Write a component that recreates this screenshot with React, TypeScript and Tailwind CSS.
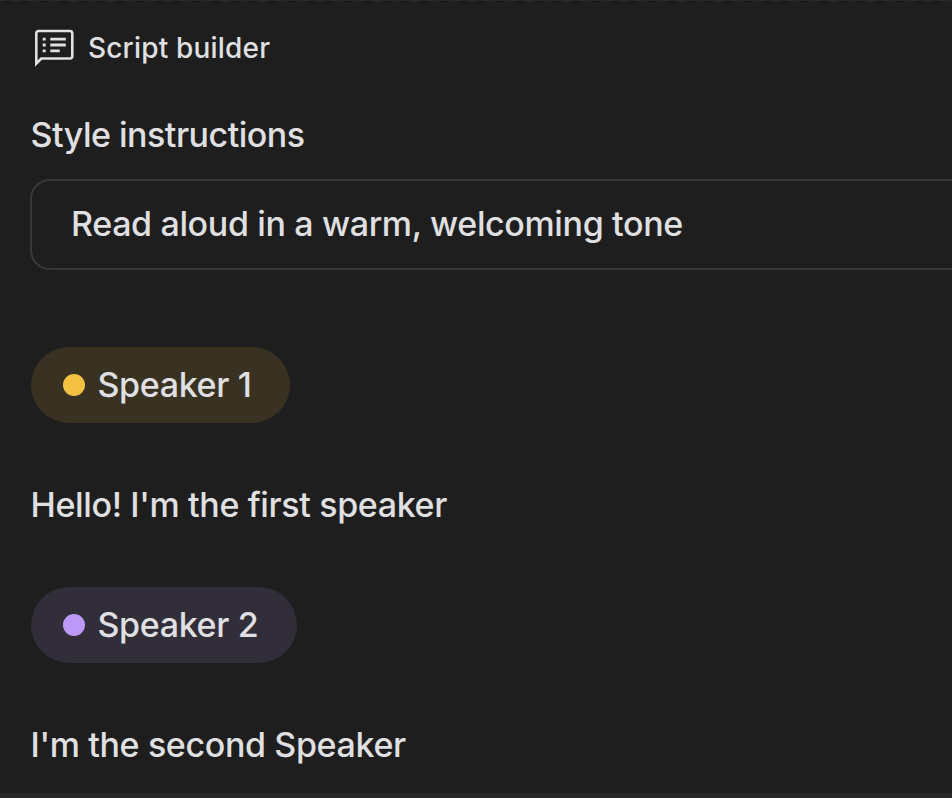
import React from "react";

function Speaker({ label, pill, dot }: { label: string; pill: string; dot: string }) {
  return (
    <div className={`flex h-[76.5px] items-center rounded-full pl-8 ${pill}`}>
      <span className={`size-[22px] rounded-full ${dot}`} />
      <span className="ml-[13px] text-[34px] leading-[40px] whitespace-nowrap">{label}</span>
    </div>
  );
}

export default function App() {
  return (
    <main className="flex h-[798px] w-[952px] flex-col items-start overflow-hidden border-b-[5px] border-[#292a2a] bg-[#1e1e1e] pl-[30.5px] font-['Inter',sans-serif] font-[450] tracking-[-0.36px] text-[#e0e0e2]">
      <div className="-ml-[30.5px] h-[2px] w-[952px] border-t border-[#272727] bg-[repeating-linear-gradient(90deg,#272727_0px,#272727_2px,#141414_2px,#141414_11px,#272727_11px,#272727_19px)]" />
      <header className="mt-[26px] flex h-10 items-center">
        <svg className="ml-[3.9px] h-[38px] w-[40px]" viewBox="0 0 40 38" fill="none">
          <path d="M2.3 34.5V4.5Q2.3 2 4.8 2H35.8Q38.3 2 38.3 4.5V27Q38.3 29.5 35.8 29.5H7.3Z" stroke="currentColor" strokeWidth="2.6" />
          <path d="M8.7 10.2h3M8.7 16h3M8.7 21.8h3M16.3 10.2h15.5M16.3 16h15.5M16.3 21.8h9.5" stroke="currentColor" strokeWidth="2.8" />
        </svg>
        <h1 className="ml-[13.6px] text-[28px] leading-[40px] font-[450] tracking-[0.18px]">Script builder</h1>
      </header>
      <h2 className="mt-[47px] text-[34px] leading-[40px] font-[450] tracking-[-0.5px]">Style instructions</h2>
      <div className="-ml-[0.2px] mt-[24px] flex h-[91px] w-[980px] shrink-0 items-center rounded-[20px] border-2 border-[#383838] pb-[2px] pl-[38.7px] text-[34px]">Read aloud in a warm, welcoming tone</div>
      <div className="mt-[76.7px]"><Speaker label="Speaker 1" pill="w-[259px] bg-[#393222]" dot="bg-[#f2c142]" /></div>
      <p className="mt-[61.8px] text-[34px] leading-[40px]">Hello! I'm the first speaker</p>
      <div className="mt-[61.7px]"><Speaker label="Speaker 2" pill="w-[266px] bg-[#322e39]" dot="bg-[#bd99f7]" /></div>
      <p className="mt-[61.8px] text-[34px] leading-[40px]">I'm the second Speaker</p>
    </main>
  );
}
